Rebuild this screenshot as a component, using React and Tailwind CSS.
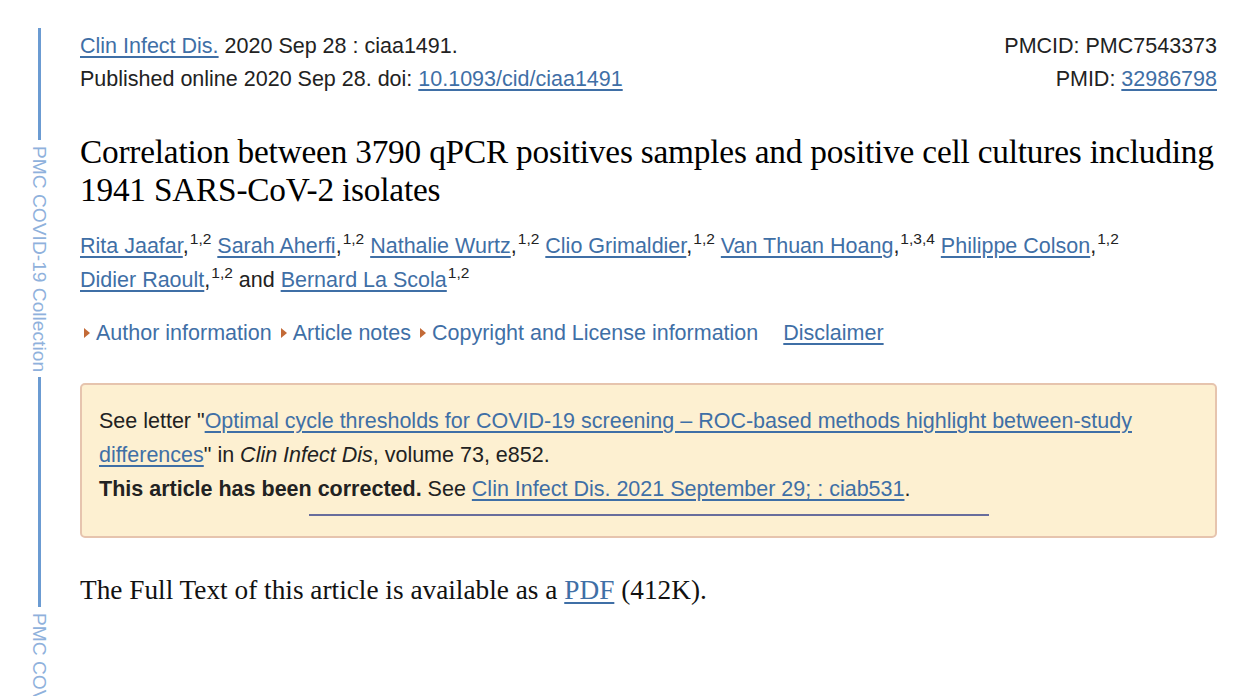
import React from "react";

const SANS = "font-['Liberation_Sans',Arial,sans-serif]";
const SERIF = "font-['Liberation_Serif','Times_New_Roman',serif]";
const LINK = "text-[#3f6fa6] underline underline-offset-[3px] decoration-[1.5px]";

// Authors with their affiliation numbers
const AUTHORS = [
  { name: "Rita Jaafar", aff: "1,2" },
  { name: "Sarah Aherfi", aff: "1,2" },
  { name: "Nathalie Wurtz", aff: "1,2" },
  { name: "Clio Grimaldier", aff: "1,2" },
  { name: "Van Thuan Hoang", aff: "1,3,4" },
  { name: "Philippe Colson", aff: "1,2" },
];

const Sup = ({ children }) => (
  <sup className="text-[15.5px] relative top-[-9px] ml-[1px]">{children}</sup>
);

const Toggle = ({ children }) => (
  <span className="inline-flex items-center mr-[9px]">
    <span className="w-0 h-0 border-y-[5px] border-y-transparent border-l-[6px] border-l-[#c36a37] mr-[6px]" />
    <span className="text-[#3f6fa6]">{children}</span>
  </span>
);

function Sidebar() {
  const Label = () => (
    <span className={`${SANS} [writing-mode:vertical-rl] text-[19.2px] leading-[14px] text-[#8fb1dc] pt-[6px] pb-[5px] whitespace-nowrap`}>
      PMC COVID-19 Collection
    </span>
  );
  return (
    <div className="w-[78px] shrink-0 flex flex-col items-center pt-[28px] h-[696px] overflow-hidden">
      <div className="w-[3px] h-[112px] shrink-0 bg-[#6b9bd2]" />
      <Label />
      <div className="w-[3px] h-[230px] shrink-0 bg-[#6b9bd2]" />
      <Label />
    </div>
  );
}

export default function App() {
  return (
    <div className="flex h-[696px] overflow-hidden bg-white">
      <Sidebar />
      <div className={`${SANS} flex-1 pl-[2px] pr-[23px] text-[21.5px] text-[#222]`}>
        {/* citation header */}
        <div className="flex justify-between pt-[30px] leading-[33px]">
          <div>
            <div><a className={LINK}>Clin Infect Dis.</a> 2020 Sep 28 : ciaa1491.</div>
            <div>Published online 2020 Sep 28. doi: <a className={LINK}>10.1093/cid/ciaa1491</a></div>
          </div>
          <div className="text-right">
            <div>PMCID: PMC7543373</div>
            <div>PMID: <a className={LINK}>32986798</a></div>
          </div>
        </div>

        <h1 className={`${SERIF} text-[33.3px] leading-[38px] text-black mt-[37px] tracking-[-0.2px]`}>
          Correlation between 3790 qPCR positives samples and positive cell cultures including<br />
          1941 SARS-CoV-2 isolates
        </h1>

        <div className="mt-[20px] leading-[34px]">
          {AUTHORS.map(a => (
            <span key={a.name}>
              <a className={LINK}>{a.name}</a>,<Sup>{a.aff}</Sup>{" "}
            </span>
          ))}
          <br />
          <a className={LINK}>Didier Raoult</a>,<Sup>1,2</Sup> and <a className={LINK}>Bernard La Scola</a><Sup>1,2</Sup>
        </div>

        <div className="flex items-center mt-[19px] ml-[4px] leading-[34px]">
          <Toggle>Author information</Toggle>
          <Toggle>Article notes</Toggle>
          <Toggle>Copyright and License information</Toggle>
          <a className={`${LINK} ml-[16px]`}>Disclaimer</a>
        </div>

        {/* correction notice */}
        <div className="mt-[33px] border-2 border-[#e6c4ae] rounded-[5px] bg-[#fdf0d1] px-[17px] pt-[19px] pb-[20px] leading-[34px]">
          <div>
            See letter "<a className={LINK}>Optimal cycle thresholds for COVID-19 screening – ROC-based methods highlight between-study<br />differences</a>" in <i>Clin Infect Dis</i>, volume 73, e852.
          </div>
          <div>
            <b>This article has been corrected.</b> See <a className={LINK}>Clin Infect Dis. 2021 September 29; : ciab531</a>.
          </div>
          <div className="w-[680px] mx-auto h-[2px] bg-[#686d9c] mt-[8px]" />
        </div>

        <p className={`${SERIF} text-[27.3px] leading-[34px] text-[#111] mt-[35px]`}>
          The Full Text of this article is available as a <a className={LINK}>PDF</a> (412K).
        </p>
      </div>
    </div>
  );
}
